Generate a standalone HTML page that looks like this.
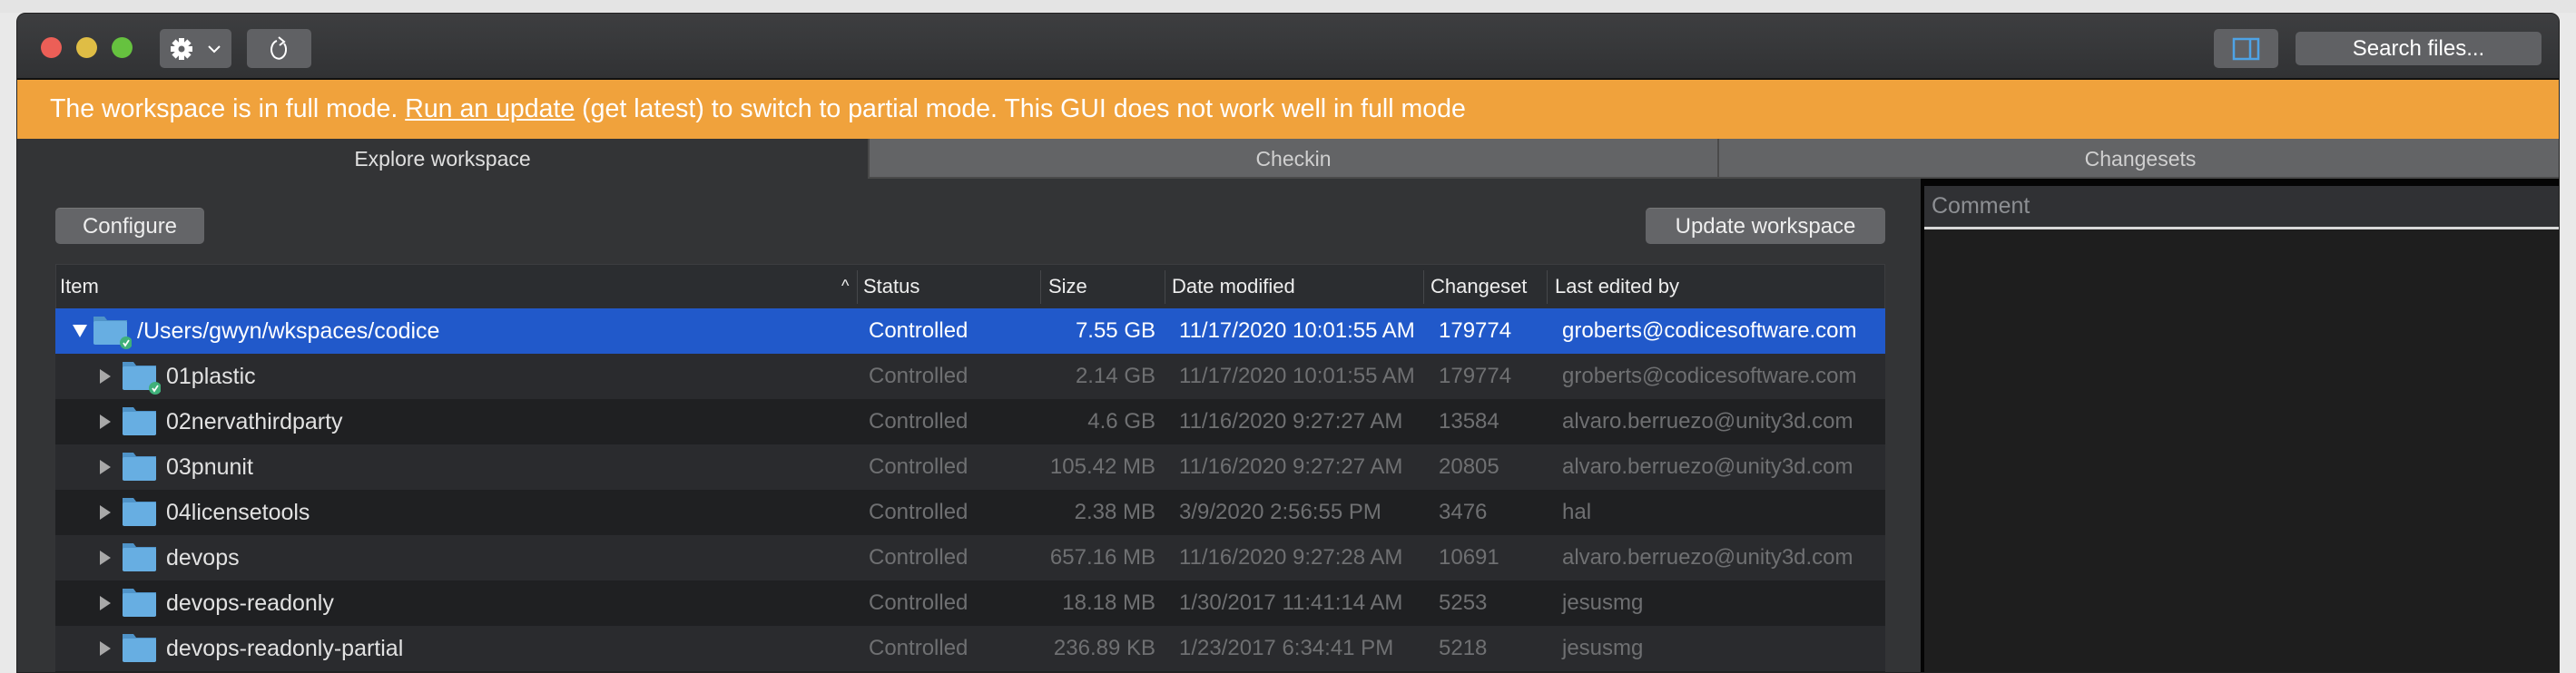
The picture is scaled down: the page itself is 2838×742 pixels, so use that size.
<!DOCTYPE html>
<html style="width:2838px;height:742px;overflow:hidden"><head><meta charset="utf-8"><style>
*{margin:0;padding:0;box-sizing:border-box}
body{width:2838px;height:742px;overflow:hidden;background:#e9e9e9;font-family:"Liberation Sans",sans-serif;position:relative}
.a{position:absolute}
.win{left:18px;top:14px;width:2802px;height:728px;background:#333436;border-radius:10px 10px 0 0;overflow:hidden;border:1px solid #222}
.tb{left:0;top:0;width:100%;height:73px;background:linear-gradient(#3d3e40,#313234);border-bottom:2px solid #111}
.dot{width:23px;height:23px;border-radius:50%;top:26px}
.btn{background:#606164;border-radius:5px}
.banner{left:0;top:73px;width:100%;height:65px;background:#f0a23c;color:#fff;font-size:28.5px;line-height:65px;padding-left:36px;white-space:nowrap}
.tab{top:138px;height:44px;line-height:44px;text-align:center;font-size:23px;color:#d0d0d0;background:#636466;border-bottom:2px solid #4a4a4a}
.pb{background:#646568;border-radius:5px;color:#eee;font-size:24px;text-align:center;border-top:1px solid #777}
.hdr{left:42px;top:276px;width:2016px;height:49px;background:#2b2d30;border:1px solid #3c3d40;border-bottom:none}
.hc{top:0;height:49px;line-height:47px;color:#eee;font-size:22px}
.sep{top:6px;width:1px;height:37px;background:#46474a}
.row{width:2016px;height:50px;font-size:24px;line-height:50px;color:#6f7072;white-space:nowrap;overflow:hidden}
.row span{position:absolute}
.nm{color:#e2e2e2;font-size:25px}
.sel{background:#2159ca;color:#fff}
.sel .nm{color:#fff}
.r1{background:#2a2b2e}.r0{background:#1f2022}
</style></head><body>
<div class="a" style="left:0;top:0;width:2838px;height:14px;background:#e4e4e4"></div>
<div class="a win">
 <div class="a tb">
  <div class="a dot" style="left:26px;background:#ec5f57"></div>
  <div class="a dot" style="left:65px;background:#dfbd45"></div>
  <div class="a dot" style="left:104px;background:#66c23f"></div>
  <div class="a btn" style="left:157px;top:17px;width:79px;height:43px">
   <svg class="a" style="left:10px;top:8px" width="28" height="28" viewBox="0 0 28 28"><g fill="#fff"><circle cx="14" cy="14" r="8"/><rect x="11" y="2" width="6" height="24"/><rect x="2" y="11" width="24" height="6"/><rect x="11" y="2" width="6" height="24" transform="rotate(45 14 14)"/><rect x="11" y="2" width="6" height="24" transform="rotate(-45 14 14)"/></g><circle cx="14" cy="14" r="3.5" fill="#606164"/></svg>
   <svg class="a" style="left:52px;top:17px" width="16" height="10"><path d="M2 2l6 6 6-6" stroke="#fff" stroke-width="2" fill="none"/></svg>
  </div>
  <div class="a btn" style="left:253px;top:17px;width:71px;height:43px">
   <svg class="a" style="left:22px;top:7px" width="28" height="30" viewBox="0 0 28 30"><path d="M19 9 A8 10 0 1 1 11 6" stroke="#fff" stroke-width="2" fill="none"/><path d="M13 2l6 5-5 4" stroke="#fff" stroke-width="2" fill="none"/></svg>
  </div>
  <div class="a btn" style="left:2420px;top:17px;width:71px;height:43px">
   <svg class="a" style="left:20px;top:9px" width="32" height="26"><rect x="2" y="2" width="27" height="22" stroke="#4ea3e6" stroke-width="2.5" fill="none"/><line x1="20" y1="2" x2="20" y2="24" stroke="#4ea3e6" stroke-width="2.5"/></svg>
  </div>
  <div class="a btn" style="left:2510px;top:20px;width:271px;height:37px;color:#fff;font-size:24px;line-height:37px;text-align:center">Search files...</div>
 </div>
 <div class="a banner">The workspace is in full mode. <u>Run an update</u> (get latest) to switch to partial mode. This GUI does not work well in full mode</div>
 <div class="a tab" style="left:0;width:937px;background:#333436;border:none;color:#e0e0e0">Explore workspace</div>
 <div class="a tab" style="left:937px;width:936px;border-left:2px solid #4a4a4a">Checkin</div>
 <div class="a tab" style="left:1873px;width:930px;border-left:2px solid #4a4a4a">Changesets</div>
 <div class="a" style="left:2097px;top:182px;width:710px;height:560px;background:#050505"></div>
 <div class="a" style="left:2101px;top:190px;width:710px;height:45px;background:#303134;color:#8d8f93;font-size:25px;line-height:45px;padding-left:8px">Comment</div>
 <div class="a" style="left:2101px;top:235px;width:710px;height:3px;background:#d8d8d8"></div>
 <div class="a" style="left:2101px;top:238px;width:710px;height:510px;background:#1e1e1e"></div>
 <div class="a pb" style="left:42px;top:214px;width:164px;height:40px;line-height:39px">Configure</div>
 <div class="a pb" style="left:1794px;top:214px;width:264px;height:40px;line-height:39px">Update workspace</div>
 <div class="a hdr">
  <div class="a hc" style="left:4px">Item</div>
  <div class="a hc" style="left:865px;font-size:18px">^</div>
  <div class="a sep" style="left:882px"></div>
  <div class="a hc" style="left:889px">Status</div>
  <div class="a sep" style="left:1084px"></div>
  <div class="a hc" style="left:1093px">Size</div>
  <div class="a sep" style="left:1221px"></div>
  <div class="a hc" style="left:1229px">Date modified</div>
  <div class="a sep" style="left:1506px"></div>
  <div class="a hc" style="left:1514px">Changeset</div>
  <div class="a sep" style="left:1642px"></div>
  <div class="a hc" style="left:1651px">Last edited by</div>
 </div>
 <div class="a" style="left:42px;top:325px;width:2016px;height:3px;background:#3a3c40"></div>
 <div id="rows"></div>
</div>
<svg width="0" height="0" style="position:absolute"><defs>
<g id="fo"><path d="M0 3 h12 l3 4 h22 v26 h-37z" fill="#4f93c8"/><rect x="0" y="8" width="37" height="26" rx="2" fill="#67aee2"/></g>
<g id="chk"><circle cx="0" cy="0" r="7" fill="#3fb07a"/><path d="M-3 0l2 3 4-6" stroke="#fff" stroke-width="1.8" fill="none"/></g>
</defs></svg>
<script>
var d=[["/Users/gwyn/wkspaces/codice","7.55 GB","11/17/2020 10:01:55 AM","179774","groberts@codicesoftware.com"],
["01plastic","2.14 GB","11/17/2020 10:01:55 AM","179774","groberts@codicesoftware.com"],
["02nervathirdparty","4.6 GB","11/16/2020 9:27:27 AM","13584","alvaro.berruezo@unity3d.com"],
["03pnunit","105.42 MB","11/16/2020 9:27:27 AM","20805","alvaro.berruezo@unity3d.com"],
["04licensetools","2.38 MB","3/9/2020 2:56:55 PM","3476","hal"],
["devops","657.16 MB","11/16/2020 9:27:28 AM","10691","alvaro.berruezo@unity3d.com"],
["devops-readonly","18.18 MB","1/30/2017 11:41:14 AM","5253","jesusmg"],
["devops-readonly-partial","236.89 KB","1/23/2017 6:34:41 PM","5218","jesusmg"],
["","","","",""]];
var h="";
d.forEach(function(r,i){
 var top=325+i*50, cls=i==0?"sel":(i%2?"r1":"r0");
 var ax=i==0?18:48, fx=i==0?42:74, tx=i==0?90:122;
 var hh=i==8?(728-top):50;
 var arrow=i==8?"":(i==0?'<svg style="position:absolute;left:'+ax+'px;top:17px" width="18" height="16"><path d="M1 1h16l-8 14z" fill="#fff"/></svg>':'<svg style="position:absolute;left:'+ax+'px;top:16px" width="14" height="18"><path d="M1 1l12 8-12 8z" fill="#a8a8a8"/></svg>');
 var fold=i==8?"":'<svg style="position:absolute;left:'+fx+'px;top:6px" width="42" height="40"><use href="#fo"/>'+(i<2?'<use href="#chk" x="36" y="32"/>':'')+'</svg>';
 h+='<div class="a row '+cls+'" style="left:42px;top:'+top+'px;height:'+hh+'px">'+arrow+fold+
 '<span class="nm" style="left:'+tx+'px">'+r[0]+'</span>'+
 '<span style="left:896px">'+(r[1]?"Controlled":"")+'</span>'+
 '<span style="right:'+(2016-1212)+'px">'+r[1]+'</span>'+
 '<span style="left:1238px">'+r[2]+'</span>'+
 '<span style="left:1524px">'+r[3]+'</span>'+
 '<span style="left:1660px">'+r[4]+'</span></div>';
});
document.getElementById("rows").innerHTML=h;
</script>
</body></html>
